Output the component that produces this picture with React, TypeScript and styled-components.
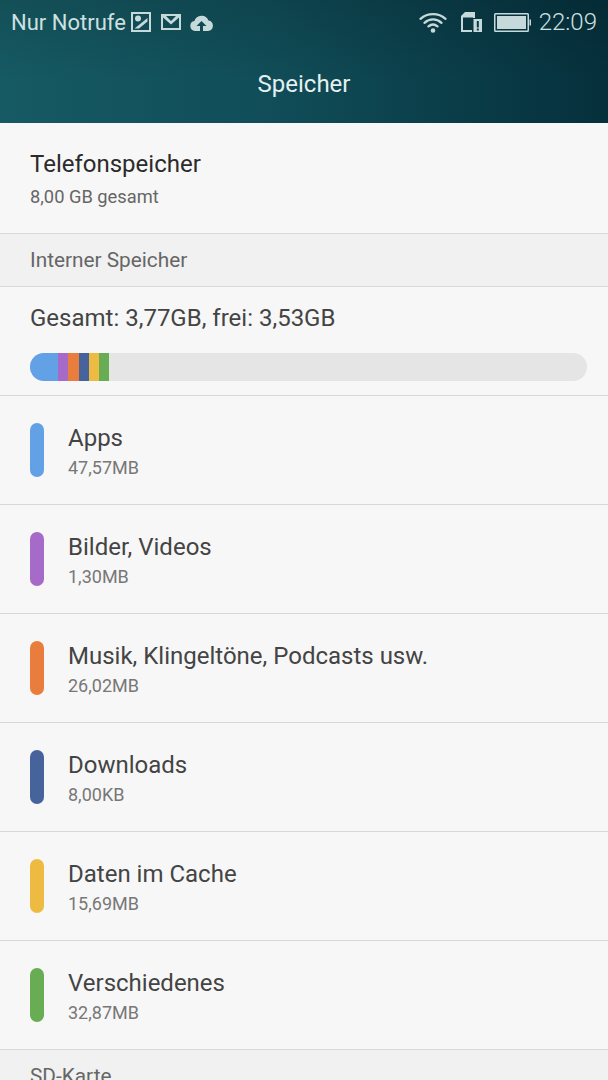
import React from 'react';
import styled, { createGlobalStyle } from 'styled-components';

const GlobalStyle = createGlobalStyle`
  html, body {
    margin: 0;
    padding: 0;
    background: #f7f7f7;
  }
  body {
    font-family: Roboto, "Noto Sans", sans-serif;
    overflow: hidden;
  }
`;

const Page = styled.div`
  width: 608px;
  height: 1080px;
  overflow: hidden;
  background: #f7f7f7;
`;

const Header = styled.header`
  height: 123px;
  background:
    linear-gradient(180deg, rgba(0, 0, 0, 0.12) 0%, rgba(0, 0, 0, 0) 65%),
    linear-gradient(90deg, #165a63 0%, #104d58 45%, #05303c 100%);
  display: flex;
  flex-direction: column;
`;

const StatusBar = styled.div`
  height: 44px;
  padding: 0 11px;
  display: flex;
  align-items: center;
  justify-content: space-between;
  color: #cfe0e0;
  font-size: 22px;
`;

const StatusGroup = styled.div`
  display: flex;
  align-items: center;
`;

const Clock = styled.span`
  margin-left: 8px;
  font-size: 24px;
  font-weight: 300;
`;

const Title = styled.h1`
  margin: 0;
  padding-top: 26px;
  font-size: 24px;
  line-height: 28px;
  font-weight: 400;
  text-align: center;
  color: #e6f0f0;
`;

const PhoneBlock = styled.div`
  height: 111px;
  padding: 27px 30px 0;
  box-sizing: border-box;
  border-bottom: 1px solid #d8d8d8;
`;

const PhoneTitle = styled.div`
  font-size: 24px;
  line-height: 28px;
  color: #2b2b2b;
`;

const PhoneSub = styled.div`
  margin-top: 8px;
  font-size: 18.3px;
  line-height: 22px;
  color: #666;
`;

const SectionHead = styled.div`
  height: 53px;
  box-sizing: border-box;
  padding: 0 30px;
  display: flex;
  align-items: center;
  background: #f1f1f1;
  border-bottom: 1px solid #d8d8d8;
  font-size: 20.8px;
  color: #666;
`;

const Summary = styled.div`
  height: 109px;
  box-sizing: border-box;
  padding: 17px 21px 0 30px;
  border-bottom: 1px solid #d8d8d8;
`;

const SummaryText = styled.div`
  font-size: 24px;
  line-height: 28px;
  color: #444;
`;

const Bar = styled.div`
  margin-top: 21px;
  height: 28px;
  display: flex;
  border-radius: 14px;
  overflow: hidden;
  background: #e5e5e5;
`;

const BarPart = styled.div<{ $color: string; $width: number }>`
  width: ${(p) => p.$width}px;
  background: ${(p) => p.$color};
`;

const Row = styled.div`
  height: 109px;
  box-sizing: border-box;
  padding: 0 30px;
  display: flex;
  align-items: center;
  border-bottom: 1px solid #d8d8d8;
`;

const Pill = styled.div<{ $color: string }>`
  width: 14px;
  height: 54px;
  border-radius: 7px;
  background: ${(p) => p.$color};
  margin-right: 24px;
`;

const RowText = styled.div`
  padding-top: 2px;
`;

const RowTitle = styled.div`
  font-size: 24px;
  line-height: 30px;
  color: #444;
`;

const RowSize = styled.div`
  margin-top: 4px;
  font-size: 18px;
  line-height: 22px;
  color: #777;
`;

const IconSvg = styled.svg<{ $left?: number }>`
  display: block;
  flex-shrink: 0;
  margin-left: ${(p) => p.$left ?? 0}px;
  fill: #c7dadb;
`;

const items = [
  { name: 'Apps', size: '47,57MB', color: '#63a1e6' },
  { name: 'Bilder, Videos', size: '1,30MB', color: '#a66bc9' },
  { name: 'Musik, Klingeltöne, Podcasts usw.', size: '26,02MB', color: '#e87d3e' },
  { name: 'Downloads', size: '8,00KB', color: '#46639c' },
  { name: 'Daten im Cache', size: '15,69MB', color: '#eebb42' },
  { name: 'Verschiedenes', size: '32,87MB', color: '#68ad53' },
];

const barParts = [
  { color: '#63a1e6', width: 28 },
  { color: '#a66bc9', width: 10 },
  { color: '#e87d3e', width: 11 },
  { color: '#46639c', width: 10 },
  { color: '#eebb42', width: 10 },
  { color: '#68ad53', width: 10 },
];

function StatusIcons() {
  return (
    <>
      <IconSvg $left={5} width="20" height="20" viewBox="0 0 20 20">
        <path fillRule="evenodd" d="M0 0h20v20H0zM2 2v16h16V2zM3.500 16.500 16.500 6v3.500L8 16.500zM7 3.500a3 3 0 1 1 0 6 3 3 0 0 1 0-6z" />
      </IconSvg>
      <IconSvg $left={10} width="20" height="16" viewBox="0 0 20 16">
        <path fillRule="evenodd" d="M0 0h20v16H0zM2 3.500V14h16V3.500L10 10.500zM5 2 10 7 15 2z" />
      </IconSvg>
      <IconSvg $left={9} width="23" height="17" viewBox="0 0 23 17">
        <path fillRule="evenodd" d="M5 17a5 5 0 0 1-.6-9.900A7.500 7.500 0 0 1 18.500 6.500 5.300 5.300 0 0 1 18 17h-5v-5h3.500L11.500 7l-5 5H10v5z" />
      </IconSvg>
    </>
  );
}

function SystemIcons() {
  return (
    <>
      <IconSvg width="28" height="21" viewBox="0 0 28 21">
        <path fill="none" stroke="#c7dadb" strokeWidth="2.300" strokeLinecap="round" d="M1.500 6.800C8.500 .5 19.500 .5 26.500 6.800M5.500 10.800C10.500 6.300 17.500 6.300 22.500 10.800M9.500 14.400C12.200 12.100 15.800 12.100 18.500 14.400" />
        <circle cx="14" cy="18.500" r="2.300" />
      </IconSvg>
      <IconSvg $left={14} width="21" height="20" viewBox="0 0 21 20">
        <path fillRule="evenodd" d="M4 0h10v6h-2v-.5H2V18h9v2H0V4zM12.500 7H21v13h-8.500zM15.800 9v6.500h2V9zM15.800 16.500v2h2v-2z" />
      </IconSvg>
      <IconSvg $left={12} width="37" height="19" viewBox="0 0 37 19">
        <path fillRule="evenodd" d="M1.500 0h32A1.500 1.500 0 0 1 35 1.500v16a1.500 1.500 0 0 1-1.500 1.500h-32A1.500 1.500 0 0 1 0 17.500v-16A1.500 1.500 0 0 1 1.500 0zM1.500 1.500v16h32v-16z" />
        <path d="M3 3h29v13H3zM35.500 6.500H37v6h-1.500z" />
      </IconSvg>
    </>
  );
}

export default function App() {
  return (
    <Page>
      <GlobalStyle />
      <Header>
        <StatusBar>
          <StatusGroup>
            Nur Notrufe
            <StatusIcons />
          </StatusGroup>
          <StatusGroup>
            <SystemIcons />
            <Clock>22:09</Clock>
          </StatusGroup>
        </StatusBar>
        <Title>Speicher</Title>
      </Header>
      <PhoneBlock>
        <PhoneTitle>Telefonspeicher</PhoneTitle>
        <PhoneSub>8,00 GB gesamt</PhoneSub>
      </PhoneBlock>
      <SectionHead>Interner Speicher</SectionHead>
      <Summary>
        <SummaryText>Gesamt: 3,77GB, frei: 3,53GB</SummaryText>
        <Bar>
          {barParts.map((part) => (
            <BarPart key={part.color} $color={part.color} $width={part.width} />
          ))}
        </Bar>
      </Summary>
      {items.map((item) => (
        <Row key={item.name}>
          <Pill $color={item.color} />
          <RowText>
            <RowTitle>{item.name}</RowTitle>
            <RowSize>{item.size}</RowSize>
          </RowText>
        </Row>
      ))}
      <SectionHead>SD-Karte</SectionHead>
    </Page>
  );
}
